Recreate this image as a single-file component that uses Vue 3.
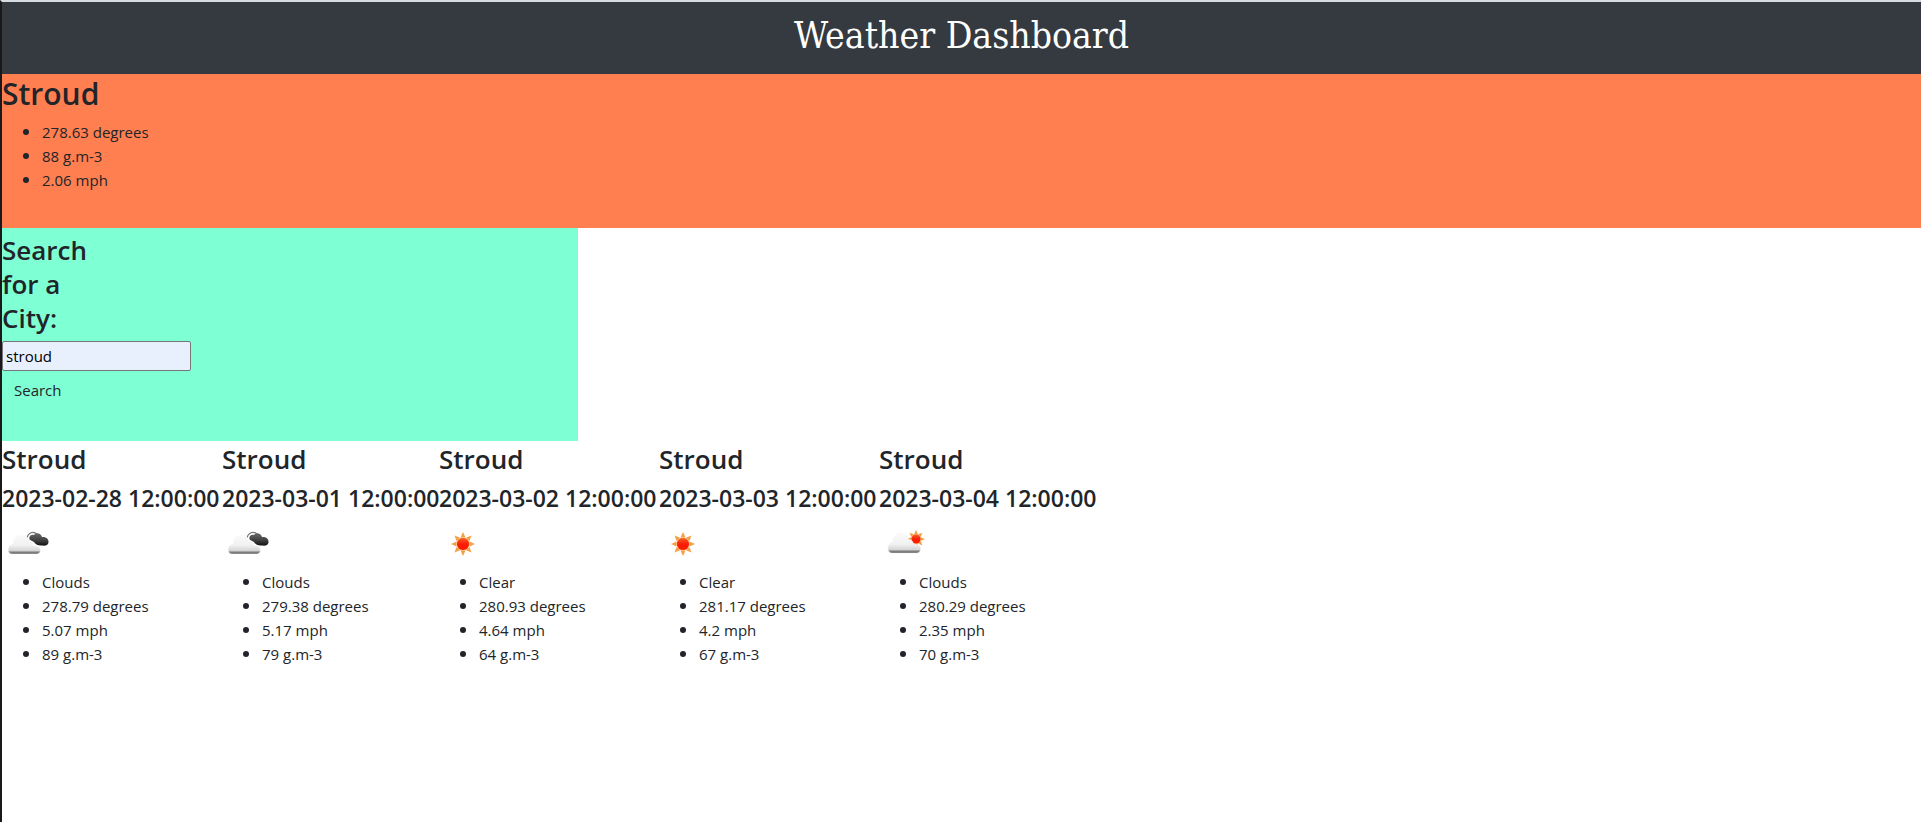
<script setup>
import { ref } from 'vue'

const city = ref('stroud')
const current = ['278.63 degrees', '88 g.m-3', '2.06 mph']
const forecast = [
  { date: '2023-02-28 12:00:00', icon: 'overcast', items: ['Clouds', '278.79 degrees', '5.07 mph', '89 g.m-3'] },
  { date: '2023-03-01 12:00:00', icon: 'overcast', items: ['Clouds', '279.38 degrees', '5.17 mph', '79 g.m-3'] },
  { date: '2023-03-02 12:00:00', icon: 'clear', items: ['Clear', '280.93 degrees', '4.64 mph', '64 g.m-3'] },
  { date: '2023-03-03 12:00:00', icon: 'clear', items: ['Clear', '281.17 degrees', '4.2 mph', '67 g.m-3'] },
  { date: '2023-03-04 12:00:00', icon: 'partly', items: ['Clouds', '280.29 degrees', '2.35 mph', '70 g.m-3'] }
]
const rays = [0, 45, 90, 135, 180, 225, 270, 315]
</script>

<template>
  <div class="page">
    <svg class="defs" width="0" height="0" aria-hidden="true">
      <defs>
        <linearGradient id="white-cloud" x1="0" y1="0" x2="0" y2="1">
          <stop offset="0" stop-color="#fbfbfb" />
          <stop offset="0.55" stop-color="#f1f1f1" />
          <stop offset="0.82" stop-color="#d6d6d6" />
          <stop offset="0.9" stop-color="#8a8a8a" />
          <stop offset="1" stop-color="#555555" />
        </linearGradient>
        <linearGradient id="dark-cloud" x1="0" y1="0" x2="0" y2="1">
          <stop offset="0" stop-color="#6a6a6a" />
          <stop offset="0.6" stop-color="#3d3d3d" />
          <stop offset="1" stop-color="#111111" />
        </linearGradient>
        <linearGradient id="sun-disc" x1="0" y1="0" x2="0" y2="1">
          <stop offset="0" stop-color="#f5622a" />
          <stop offset="0.5" stop-color="#fb1d05" />
          <stop offset="1" stop-color="#ff1a00" />
        </linearGradient>
        <g id="sun">
          <path v-for="r in rays" :key="r" d="M-2.5 -6.5 L0 -12 L2.5 -6.5 Z" fill="#f2a148" :transform="`rotate(${r})`" />
          <circle r="6.5" fill="#f7a04a" />
          <circle r="6" fill="url(#sun-disc)" />
        </g>
        <path id="cloud" d="M4 20 C1.5 20 0 18 0 15.5 C0 12 2 10 5 9.5 C5 4 8.5 0.5 13 0.5 C17 0.5 19.5 2.5 20.5 6.5 C23.5 6.5 25 8 25.5 11 C30 11 32.5 13 32.5 16 C32.5 18.5 31 20 28.5 20 Z" />
      </defs>
    </svg>

    <header class="banner"><h1>Weather Dashboard</h1></header>

    <section class="current">
      <h2>Stroud</h2>
      <ul><li v-for="item in current" :key="item">{{ item }}</li></ul>
    </section>

    <form class="search" @submit.prevent>
      <label for="city">Search for a City:</label>
      <input id="city" v-model="city" type="text">
      <button type="submit">Search</button>
    </form>

    <section class="forecast">
      <article v-for="day in forecast" :key="day.date">
        <h3>Stroud</h3>
        <h4>{{ day.date }}</h4>
        <svg class="icon" viewBox="0 0 50 50" role="img" :aria-label="day.items[0]">
          <template v-if="day.icon === 'overcast'">
            <path d="M25 18 C26 13 31 10.5 35 14" fill="none" stroke="#777777" stroke-width="1.2" />
            <path d="M28 20 C26 17 29 13.5 32 15 C34 12 39 13 40 17 C44 16.5 47 19 46.5 22.5 C46 25.5 43 26 40 25.5 C36 26 33 24 32 22 Z" fill="url(#dark-cloud)" />
            <use href="#cloud" x="6" y="14" fill="url(#white-cloud)" stroke="#ffffff" stroke-width="0.5" />
          </template>
          <use v-else-if="day.icon === 'clear'" href="#sun" x="24" y="24" />
          <template v-else>
            <g transform="translate(37 19) scale(0.75)"><use href="#sun" /></g>
            <use href="#cloud" x="9" y="13" fill="url(#white-cloud)" stroke="#ededed" stroke-width="0.5" />
          </template>
        </svg>
        <ul><li v-for="item in day.items" :key="item">{{ item }}</li></ul>
      </article>
    </section>
  </div>
</template>

<style>
body {
  background: #ffffff;
}
</style>

<style scoped>
.page {
  box-sizing: border-box;
  min-height: 100vh;
  border-top: 2px solid #d7dbe2;
  border-left: 2px solid #19191c;
  color: #212529;
  font: 400 15px/24px "Open Sans", "Noto Sans", sans-serif;
}
.defs {
  display: block;
}
h1, h2, h3, h4, ul {
  margin: 0;
}
h1 {
  color: #ffffff;
  font: 400 37px/52px "DejaVu Serif Condensed", "DejaVu Serif", serif;
}
h2 {
  margin-bottom: 6px;
  font-size: 30px;
  font-weight: 600;
  line-height: 40px;
}
h3, label {
  font-size: 26px;
  font-weight: 600;
  line-height: 34px;
}
h3 {
  margin-bottom: 6px;
  line-height: 36px;
}
h4 {
  margin-bottom: 6px;
  font-size: 23px;
  font-weight: 600;
  line-height: 31px;
  white-space: nowrap;
}
ul {
  padding-left: 40px;
}
li {
  height: 24px;
  line-height: 23px;
}
li::marker {
  font-size: 18px;
}
.banner {
  padding: 8px 0 12px;
  background: #343a40;
  text-align: center;
}
.current {
  padding-bottom: 36px;
  background: #ff7f50;
}
.search {
  display: flex;
  flex-direction: column;
  align-items: flex-start;
  box-sizing: border-box;
  width: 30%;
  padding: 5px 0 32px;
  background: #7fffd4;
}
label {
  width: 96px;
  margin-bottom: 6px;
}
input {
  box-sizing: border-box;
  width: 189px;
  height: 30px;
  padding: 1px 3px;
  border: 1px solid #767676;
  border-radius: 2px;
  background: #e8f0fe;
  color: #000000;
  font: inherit;
}
button {
  height: 38px;
  padding: 0 12px;
  border: 0;
  background: transparent;
  color: #212529;
  font: inherit;
}
.forecast {
  display: grid;
  grid-template-columns: 220px 217px repeat(3, 220px);
}
.icon {
  display: block;
  width: 50px;
  height: 50px;
}
</style>
